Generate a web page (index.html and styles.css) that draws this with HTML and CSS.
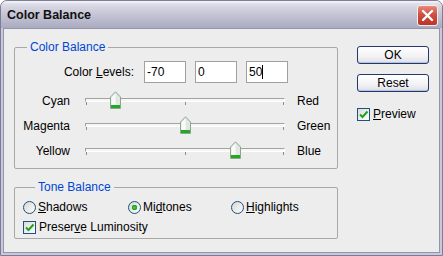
FILE: index.html
```html
<!DOCTYPE html>
<html lang="en">
<head>
  <meta charset="UTF-8">
  <title>Color Balance</title>
  <link rel="stylesheet" href="styles.css">
</head>
<body>
  <div class="window">
    <div class="titlebar">
      <span class="title">Color Balance</span>
      <span class="close">
        <svg width="13" height="13" viewBox="0 0 13 13"><path d="M2 2 L11 11 M11 2 L2 11" stroke="#fff" stroke-width="2.4" stroke-linecap="round"/></svg>
      </span>
    </div>
    <div class="frame">
      <div class="face">
        <div class="main">
          <fieldset class="group balance">
            <legend>Color Balance</legend>
            <div class="levels">
              <span class="levels-label">Color <u>L</u>evels:</span>
              <div class="field">-70</div>
              <div class="field">0</div>
              <div class="field">50<span class="caret"></span></div>
            </div>
            <div class="sliders">
              <span class="left">Cyan</span>
              <div class="track">
                <div class="groove"></div>
                <span class="thumb" style="left: 15%"><svg width="11" height="18" viewBox="0 0 11 18"><path d="M0.5 6 L5.5 0.8 L10.5 6 V17.5 H0.5 Z" fill="#e4e6e4" stroke="#8aa88e"/><path d="M1.5 6.4 L5.5 2.2 V15 H1.5 Z" fill="#fafafa"/><rect x="1" y="14" width="9" height="3" fill="#22a822"/></svg></span>
              </div>
              <span class="right">Red</span>

              <span class="left">Magenta</span>
              <div class="track">
                <div class="groove"></div>
                <span class="thumb" style="left: 50%"><svg width="11" height="18" viewBox="0 0 11 18"><path d="M0.5 6 L5.5 0.8 L10.5 6 V17.5 H0.5 Z" fill="#e4e6e4" stroke="#8aa88e"/><path d="M1.5 6.4 L5.5 2.2 V15 H1.5 Z" fill="#fafafa"/><rect x="1" y="14" width="9" height="3" fill="#22a822"/></svg></span>
              </div>
              <span class="right">Green</span>

              <span class="left">Yellow</span>
              <div class="track">
                <div class="groove"></div>
                <span class="thumb" style="left: 75%"><svg width="11" height="18" viewBox="0 0 11 18"><path d="M0.5 6 L5.5 0.8 L10.5 6 V17.5 H0.5 Z" fill="#e4e6e4" stroke="#8aa88e"/><path d="M1.5 6.4 L5.5 2.2 V15 H1.5 Z" fill="#fafafa"/><rect x="1" y="14" width="9" height="3" fill="#22a822"/></svg></span>
              </div>
              <span class="right">Blue</span>
            </div>
          </fieldset>

          <fieldset class="group tone">
            <legend>Tone Balance</legend>
            <div class="radios">
              <span class="option"><span class="radio"></span><span><u>S</u>hadows</span></span>
              <span class="option"><span class="radio checked"></span><span>Mi<u>d</u>tones</span></span>
              <span class="option"><span class="radio"></span><span><u>H</u>ighlights</span></span>
            </div>
            <div class="option check-row">
              <span class="check"><svg width="11" height="11" viewBox="0 0 11 11"><path d="M2 5.5 L4.5 8 L9.5 2.5" fill="none" stroke="#21a121" stroke-width="2"/></svg></span>
              <span>Preser<u>v</u>e Luminosity</span>
            </div>
          </fieldset>
        </div>

        <div class="side">
          <div class="btn">OK</div>
          <div class="btn reset">Reset</div>
          <div class="option preview">
            <span class="check"><svg width="11" height="11" viewBox="0 0 11 11"><path d="M2 5.5 L4.5 8 L9.5 2.5" fill="none" stroke="#21a121" stroke-width="2"/></svg></span>
            <span><u>P</u>review</span>
          </div>
        </div>
      </div>
    </div>
  </div>
</body>
</html>
```

FILE: styles.css
```css
body {
  margin: 0;
  font-family: "Liberation Sans", Arial, sans-serif;
  font-size: 12px;
  color: #000;
  background: #fff;
}
.window {
  width: 443px;
  height: 256px;
  box-sizing: border-box;
  display: flex;
  flex-direction: column;
  border: 1px solid #7c7c94;
  border-radius: 7px 7px 0 0;
  background: #c9c9d9;
  overflow: hidden;
}
.titlebar {
  height: 27px;
  flex: none;
  display: flex;
  align-items: center;
  justify-content: space-between;
  padding: 0 4px 0 6px;
  background: linear-gradient(#f6f6fa 0, #dcdce7 12%, #cacad9 40%, #b8b8cc 75%, #aaaac0 100%);
}
.title {
  font-size: 12.5px;
  font-weight: bold;
  color: #111;
}
.close {
  width: 21px;
  height: 21px;
  box-sizing: border-box;
  display: flex;
  align-items: center;
  justify-content: center;
  border: 1px solid #f4f0f0;
  border-radius: 3px;
  background: linear-gradient(#e68a7c, #cf4f42 45%, #bb3427);
  margin-top: 1px;
}
.frame {
  flex: 1;
  display: flex;
  padding: 0 2px 2px;
}
.face {
  flex: 1;
  display: flex;
  border: 1px solid #9494aa;
  background: #ededed;
}
.main {
  padding: 11px 0 0 10px;
  width: 324px;
}
.group {
  margin: 0;
  padding: 0;
  border: 1px solid #a8a8a8;
  border-radius: 2px;
  min-width: 0;
}
.group legend {
  margin-left: 12px;
  padding: 0 3px;
  line-height: 14px;
  color: #0046d5;
}
.balance {
  padding-bottom: 5px;
}
.levels {
  display: flex;
  align-items: center;
  gap: 9px;
  margin-top: 7px;
}
.levels-label {
  width: 119px;
  text-align: right;
  margin-right: 1px;
}
.field {
  width: 42px;
  height: 22px;
  box-sizing: border-box;
  border: 1px solid #a0a0a0;
  background: #fff;
  padding-left: 2px;
  display: flex;
  align-items: center;
}
.caret {
  display: inline-block;
  width: 1px;
  height: 14px;
  background: #000;
}
.sliders {
  display: grid;
  grid-template-columns: 55px 200px auto;
  grid-auto-rows: 25px;
  column-gap: 15px;
  align-items: center;
  margin-top: 5px;
}
.sliders .left {
  text-align: right;
}
.sliders .right {
  margin-left: -3px;
}
.track {
  position: relative;
  height: 10px;
  margin-top: 3px;
  background:
    linear-gradient(#8c8c8c, #8c8c8c) 1px 5px / 1px 3px no-repeat,
    linear-gradient(#8c8c8c, #8c8c8c) 50% 5px / 1px 3px no-repeat,
    linear-gradient(#8c8c8c, #8c8c8c) calc(100% - 1px) 5px / 1px 3px no-repeat;
}
.groove {
  height: 4px;
  box-sizing: border-box;
  margin-top: 1px;
  border-top: 1px solid #a2a2a2;
  border-left: 1px solid #a2a2a2;
  border-bottom: 1px solid #fff;
  border-right: 1px solid #fff;
  background: #f6f6f2;
}
.thumb {
  position: absolute;
  top: -6px;
  width: 11px;
  height: 18px;
  margin-left: -5px;
  display: block;
}
.thumb svg {
  display: block;
}
.tone {
  margin-top: 11px;
  padding: 0 0 4px 8px;
}
.radios {
  display: grid;
  grid-template-columns: 105px 103px auto;
  margin-top: 6px;
}
.option {
  display: flex;
  align-items: center;
  gap: 2px;
  height: 14px;
}
.check-row {
  margin-top: 6px;
  gap: 3px;
}
.radio {
  width: 13px;
  height: 13px;
  box-sizing: border-box;
  border: 1px solid #1c5180;
  border-radius: 50%;
  background: linear-gradient(135deg, #d8d8d2, #fcfcfc);
}
.radio.checked {
  background:
    radial-gradient(circle, #55c455 0, #21a121 2.5px, transparent 3px),
    linear-gradient(135deg, #d8d8d2, #fcfcfc);
}
.check {
  width: 13px;
  height: 13px;
  box-sizing: border-box;
  border: 1px solid #1c5180;
  background: linear-gradient(135deg, #dcdcd6, #fdfdfd);
  display: flex;
  align-items: center;
  justify-content: center;
}
.side {
  margin-left: 19px;
  padding-top: 17px;
  display: flex;
  flex-direction: column;
}
.btn {
  width: 72px;
  height: 18px;
  box-sizing: border-box;
  border: 1px solid #24386a;
  border-radius: 3px;
  background: linear-gradient(#ffffff, #f2f2f4 60%, #dedee6);
  box-shadow: inset 0 -1px 0 #b7c3dc, inset 0 1px 0 #fff;
  display: flex;
  align-items: center;
  justify-content: center;
}
.reset {
  margin-top: 10px;
}
.preview {
  margin-top: 15px;
  gap: 3px;
}
```
